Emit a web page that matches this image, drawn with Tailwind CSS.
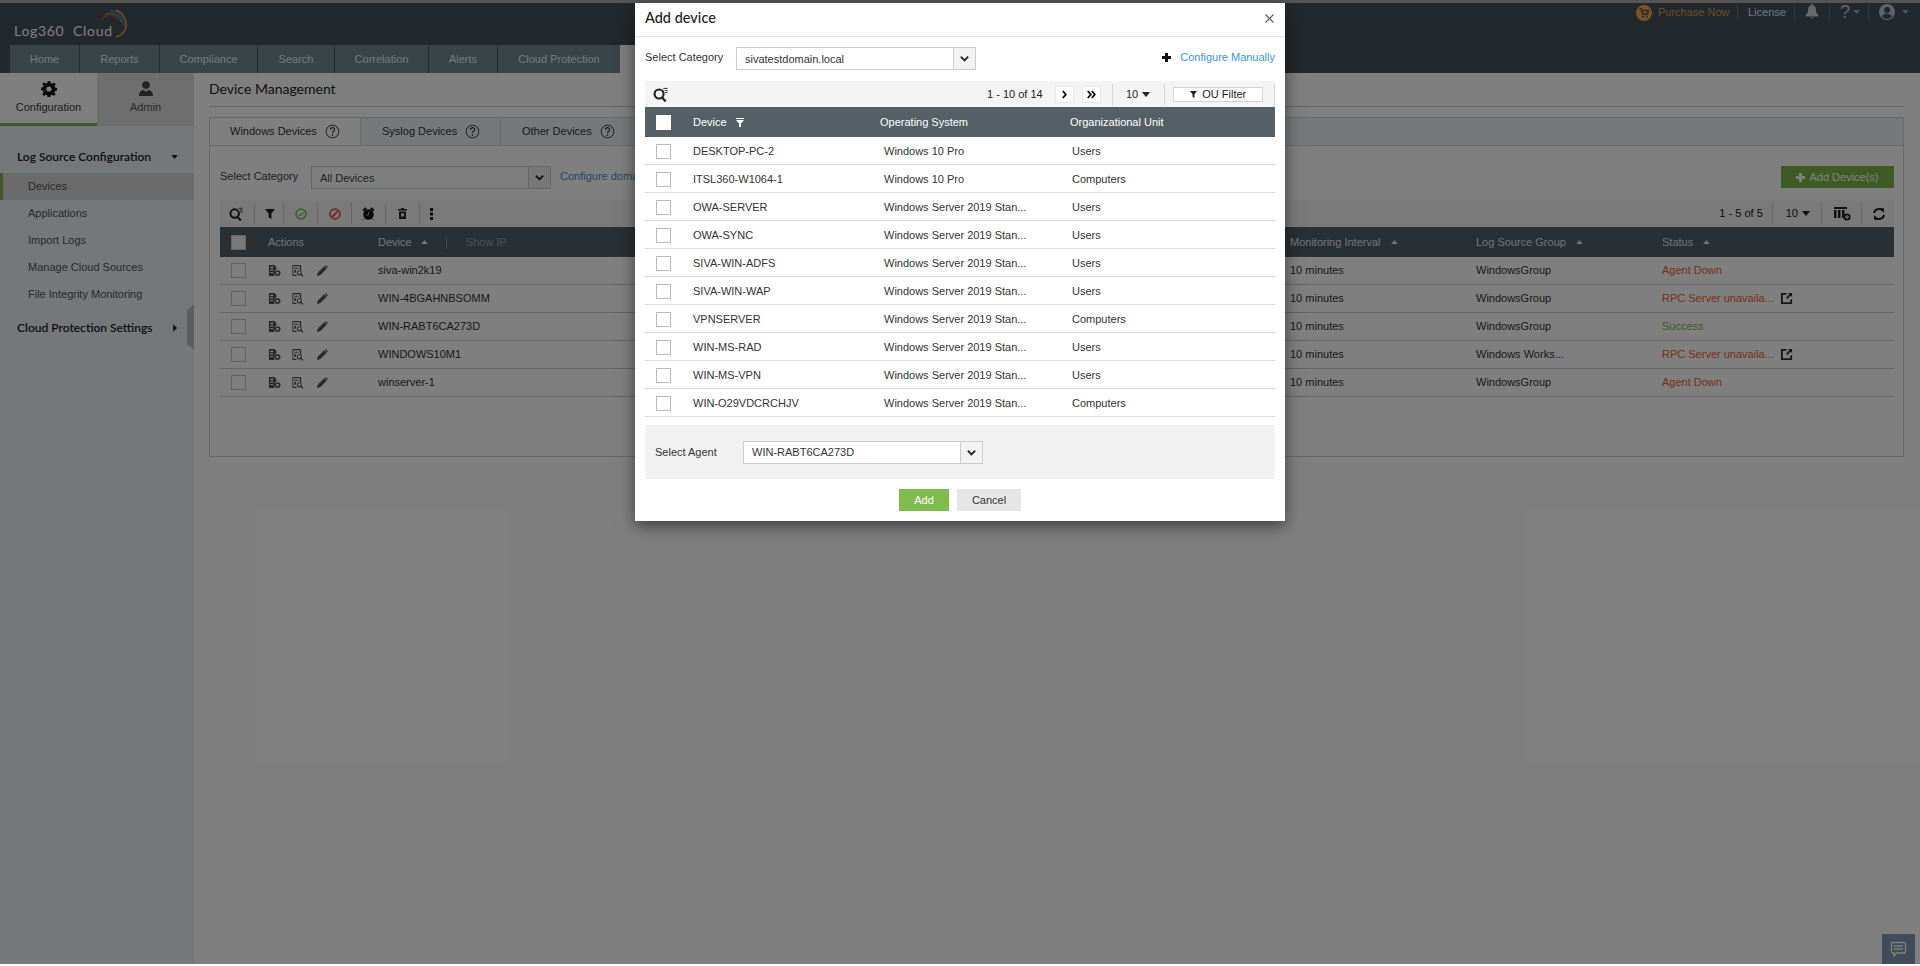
<!DOCTYPE html>
<html><head><meta charset="utf-8"><title>Log360 Cloud</title>
<script src="https://cdn.jsdelivr.net/npm/@tailwindcss/browser@4"></script></head>
<body class="bg-white">
<svg width="0" height="0" class="absolute">
<defs>
<symbol id="mag" viewBox="0 0 16 16"><circle cx="6.500" cy="7.500" r="4.800" fill="none" stroke="currentColor" stroke-width="2.300"/><path d="M9.500 11l4 4.500" stroke="currentColor" stroke-width="2.400"/><path d="M11 1.500h4.500M12.500 3.700h3M13 5.900h2.500" stroke="currentColor" stroke-width="1"/></symbol>
<symbol id="chev" viewBox="0 0 12 12"><path d="M2 4l4 4 4-4" fill="none" stroke="currentColor" stroke-width="2"/></symbol>
<symbol id="cfg" viewBox="0 0 14 14"><path d="M1 1h6l2 2v3.500H7.500V9H7v4H1zM2.500 3v1.200h3V3zm0 2.700v1.200h3V5.700zm0 2.800v1.200h3V8.500z" fill="currentColor" fill-rule="evenodd"/><circle cx="10.300" cy="9.800" r="2.300" fill="none" stroke="currentColor" stroke-width="1.700"/></symbol>
<symbol id="rep" viewBox="0 0 14 14"><path d="M1.500 1h8.500l1 1v5H9.500V2.500h-7v9H6V13H1.500z" fill="currentColor"/><path d="M3.500 4h4.500v1H3.500zM3.500 6.500h2v3h-2z" fill="currentColor"/><circle cx="9" cy="9.500" r="2.200" fill="none" stroke="currentColor" stroke-width="1.200"/><path d="M10.500 11l2.500 2.500" stroke="currentColor" stroke-width="1.300"/></symbol>
<symbol id="pen" viewBox="0 0 14 14"><path d="M1 13l.8-3.500 7-7 2.700 2.700-7 7zM9.500 2l1-1 2.500 2.500-1 1z" fill="currentColor"/></symbol>
<symbol id="ext" viewBox="0 0 14 14"><path d="M7 1H1v12h12V8h-2v3H3V3h4z" fill="currentColor"/><path d="M8.500 1H13v4.500l-1.500-1.500-3.500 3.500-1.500-1.500L10 2.500z" fill="currentColor"/></symbol>
<symbol id="up" viewBox="0 0 8 5"><path d="M0 5l4-5 4 5z" fill="currentColor"/></symbol>
<symbol id="dn" viewBox="0 0 8 5"><path d="M0 0l4 5 4-5z" fill="currentColor"/></symbol>
<symbol id="qm" viewBox="0 0 16 16"><circle cx="8" cy="8" r="6.800" fill="none" stroke="currentColor" stroke-width="1"/><path d="M5.800 6.200c0-3 4.500-3 4.500-.2 0 1.700-2.300 1.800-2.300 3.500" fill="none" stroke="currentColor" stroke-width="1.200"/><circle cx="8" cy="11.500" r=".9" fill="currentColor"/></symbol>
</defs>
</svg>

<div class="relative w-[1920px] h-[966px] overflow-hidden bg-white font-['Liberation_Sans',Arial,sans-serif] text-[11px] text-[#444]">
  <div class="h-[964px] flex flex-col">
    <div class="h-[3px] bg-[#aaa]"></div>
    <!-- header -->
    <header class="h-[70px] bg-[#465058] flex flex-col">
      <div class="h-[42px] flex justify-between">
        <div class="relative pl-[14px] pt-[18px] font-['Lato',sans-serif] text-[14px] leading-[20px] text-[#fff] tracking-[.7px]"><span class="whitespace-pre">Log360  Cloud</span><svg class="absolute left-[99px] top-[5px]" width="30" height="30" viewBox="0 0 30 30" fill="none"><path d="M3 12C8 4 15 5 19 13" stroke="#c04a4a" stroke-width="1.500"/><path d="M6 7C12 3 20 6 23 15" stroke="#5ea34c" stroke-width="1.500"/><path d="M11 3C18 2 24 8 25 18" stroke="#3f7fc2" stroke-width="1.800"/><path d="M17 2C25 5 29 14 26 22 24 26 21 28 17 29" stroke="#ef9a2e" stroke-width="1.600"/></svg></div>
        <div class="flex items-start pt-[1px] text-[11px] leading-[16px] text-[#fff]">
          <svg class="mt-[1px] mr-[6px]" width="16" height="16" viewBox="0 0 16 16"><circle cx="8" cy="8" r="8" fill="#f5a44a"/><path d="M3.500 4h2l1 5h5l1-3.500H6" fill="none" stroke="#465058" stroke-width="1.400"/><circle cx="7" cy="11.500" r="1" fill="#465058"/><circle cx="11" cy="11.500" r="1" fill="#465058"/></svg>
          <span class="w-[80px] border-r border-[#6a747c] h-[16px] text-[#d99a4e]">Purchase Now</span>
          <span class="w-[57px] pl-[10px] border-r border-[#6a747c] h-[16px] text-[#e8ecf8]">License</span>
          <span class="w-[35px] pl-[10px] border-r border-[#6a747c] h-[16px]"><svg width="14" height="15" viewBox="0 0 14 15"><path d="M7 0c1 0 1.200.8 1.200 1.200C10.500 2 11 4 11 6c0 3 1.500 4 2.500 5.500v1H.5v-1C1.500 10 3 9 3 6c0-2 .5-4 2.800-4.800C5.800.8 6 0 7 0zM5.500 13.500h3L7 15z" fill="#d0d0d0"/></svg></span>
          <span class="w-[39px] pl-[10px] border-r border-[#6a747c] h-[16px] flex items-center gap-[3px] text-[18px] text-[#c8c8c8]">?<svg width="7" height="4" class="text-[#aaa]"><use href="#dn"/></svg></span>
          <span class="w-[51px] pl-[10px] h-[16px] flex items-center gap-[7px]"><svg width="16" height="16" viewBox="0 0 16 16"><circle cx="8" cy="8" r="8" fill="#c0c4c8"/><circle cx="8" cy="6" r="3" fill="#465058"/><path d="M3 13c1-3 3-3.500 5-3.500s4 .5 5 3.500a8 8 0 0 1-10 0z" fill="#465058"/></svg><svg width="7" height="4" class="text-[#aaa]"><use href="#dn"/></svg></span>
        </div>
      </div>
      <nav class="h-[28px] pl-[10px] flex text-[#e6f3fb] leading-[28px]">
        <a class="w-[70px] text-center bg-[#748691] border-r border-[#465058]">Home</a>
        <a class="w-[80px] text-center bg-[#748691] border-r border-[#465058]">Reports</a>
        <a class="w-[98px] text-center bg-[#748691] border-r border-[#465058]">Compliance</a>
        <a class="w-[77px] text-center bg-[#748691] border-r border-[#465058]">Search</a>
        <a class="w-[94px] text-center bg-[#748691] border-r border-[#465058]">Correlation</a>
        <a class="w-[69px] text-center bg-[#748691] border-r border-[#465058]">Alerts</a>
        <a class="w-[122px] text-center bg-[#748691]">Cloud Protection</a>
        <span class="w-[90px] bg-white"></span>
      </nav>
    </header>
    <div class="flex-1 flex min-h-0">
      <!-- sidebar -->
      <aside class="relative w-[194px] bg-[#eceef2] shrink-0">
        <div class="flex h-[53px]">
          <div class="w-[97px] bg-white border-b-[3px] border-[#7fb74a] flex flex-col items-center pt-[8px] text-[#333]">
            <svg width="16" height="16" viewBox="0 0 16 16"><path d="M6.700 0h2.600l.4 2.200 1.400.6L13 1.500 14.800 3.300 13.500 5.200l.6 1.400 1.900.4v2.600l-2 .4-.6 1.400 1.300 1.800-1.800 1.800-1.900-1.300-1.400.6-.4 2H6.600l-.4-2-1.400-.6-1.800 1.300-1.800-1.800L2.500 11l-.6-1.400-1.900-.4V6.600l2-.4.500-1.400L1.200 3.100 3.100 1.200l1.800 1.300 1.400-.6zM8 5.400a2.600 2.600 0 1 0 0 5.200 2.600 2.600 0 0 0 0-5.200z" fill="#111" fill-rule="evenodd"/></svg>
            <span class="mt-[3px] leading-[14px]">Configuration</span>
          </div>
          <div class="w-[97px] bg-[#dcdcdc] flex flex-col items-center pt-[8px] text-[#555]">
            <svg width="16" height="16" viewBox="0 0 16 16" fill="#444"><circle cx="8" cy="4" r="3.800"/><path d="M1 15c0-4 2-5.500 5-6l2 2 2-2c3 .5 5 2 5 6z"/></svg>
            <span class="mt-[3px] leading-[14px]">Admin</span>
          </div>
        </div>
        <div class="h-[47px] pt-[22px] pl-[17px] pr-[16px] flex justify-between font-['Lato',sans-serif] text-[12px] leading-[18px] font-semibold text-[#222]">Log Source Configuration<svg class="mt-[7px]" width="7" height="4"><use href="#dn"/></svg></div>
        <ul class="text-[#555]">
          <li class="h-[27px] leading-[26px] pl-[25px] bg-[#d6d6d6] border-l-[3px] border-[#7fb74a]">Devices</li>
          <li class="h-[27px] leading-[27px] pl-[28px]">Applications</li>
          <li class="h-[27px] leading-[27px] pl-[28px]">Import Logs</li>
          <li class="h-[27px] leading-[27px] pl-[28px]">Manage Cloud Sources</li>
          <li class="h-[27px] leading-[27px] pl-[28px]">File Integrity Monitoring</li>
        </ul>
        <div class="mt-[11px] h-[18px] pl-[17px] pr-[17px] flex justify-between font-['Lato',sans-serif] text-[12px] leading-[18px] font-semibold text-[#222]">Cloud Protection Settings<svg class="mt-[5px]" width="4" height="8" viewBox="0 0 4 8"><path d="M0 0l4 4-4 4z" fill="#333"/></svg></div>
        <div class="absolute left-[187px] top-[231px] w-[7px] h-[46px] bg-[#b4bcc2] [clip-path:polygon(0_6px,100%_0,100%_100%,0_40px)]"></div>
      </aside>
      <!-- main -->
      <main class="flex-1 pl-[15px] pr-[16px]">
        <div class="h-[34px] border-b border-[#ccc] font-['Lato',sans-serif] text-[14px] leading-[32px] text-[#222]">Device Management</div>
        <section class="mt-[10px] h-[340px] border border-[#d4d4d4]">
          <div class="h-[28px] flex bg-[#eef0f4] text-[#333] border-b border-[#d4d4d4] leading-[27px]">
            <div class="w-[152px] h-[28px] -mt-px -ml-px pl-[20px] bg-white border border-b-0 border-[#d4d4d4] flex items-center gap-[8px]">Windows Devices<svg width="15" height="15"><use href="#qm"/></svg></div>
            <div class="w-[140px] pl-[21px] border-r border-[#d4d4d4] flex items-center gap-[8px]">Syslog Devices<svg width="15" height="15"><use href="#qm"/></svg></div>
            <div class="w-[122px] pl-[21px] flex items-center gap-[8px]">Other Devices<svg width="15" height="15"><use href="#qm"/></svg></div>
          </div>
          <div class="pl-[10px] pr-[9px]">
            <div class="mt-[20px] h-[23px] flex items-start">
              <span class="w-[91px] leading-[20px]">Select Category</span>
              <div class="w-[240px] h-[23px] border border-[#ccc] flex bg-white"><span class="flex-1 pl-[8px] leading-[23px]">All Devices</span><span class="w-[22px] bg-[#f0f0f0] border-l border-[#ccc] flex items-center justify-center text-[#222]"><svg width="11" height="11"><use href="#chev"/></svg></span></div>
              <span class="ml-[9px] leading-[20px] text-[#3f8fd8]">Configure domain</span>
              <span class="ml-auto w-[113px] h-[22px] bg-[#7fb74a] text-white flex items-center justify-center gap-[4px]"><svg width="9" height="9" viewBox="0 0 9 9"><path d="M3 0h3v3h3v3H6v3H3V6H0V3h3z" fill="#fff"/></svg>Add Device(s)</span>
            </div>
            <div class="mt-[11px] h-[27px] bg-[#f4f4f4] flex items-center text-[#222]">
              <svg class="ml-[9px] mr-[11px]" width="14" height="14"><use href="#mag"/></svg>
              <span class="h-[21px] border-l border-[#ccc]"></span>
              <svg class="ml-[10px] mr-[8px]" width="10" height="10" viewBox="0 0 11 11"><path d="M0 0h11L7 5v6L4 9V5z" fill="#222"/></svg>
              <span class="h-[21px] border-l border-[#ccc]"></span>
              <svg class="ml-[11px] mr-[10px]" width="12" height="12" viewBox="0 0 14 14" fill="none"><circle cx="7" cy="7" r="5.800" stroke="#6fc24a" stroke-width="1.800"/><path d="M4.300 7l2 2 3.500-4" stroke="#6fc24a" stroke-width="1.300"/></svg>
              <span class="h-[21px] border-l border-[#ccc]"></span>
              <svg class="ml-[11px] mr-[10px]" width="12" height="12" viewBox="0 0 14 14" fill="none"><circle cx="7" cy="7" r="5.800" stroke="#f0504a" stroke-width="2"/><path d="M3 11l8-8" stroke="#f0504a" stroke-width="2"/></svg>
              <span class="h-[21px] border-l border-[#ccc]"></span>
              <svg class="ml-[10px] mr-[10px]" width="13" height="14" viewBox="0 0 14 15"><circle cx="7" cy="8" r="5.600" fill="#111"/><path d="M1 3l2.500-2.500L5 2 2 4.500zM13 3L10.500.5 9 2l3 2.500zM2.500 12.500l-1.500 2M11.500 12.500l1.500 2" stroke="#111" stroke-width=".6" fill="#111"/><path d="M7 5v3.500H4.500" stroke="#aaa" fill="none"/></svg>
              <span class="h-[21px] border-l border-[#ccc]"></span>
              <svg class="ml-[12px] mr-[12px]" width="9" height="11" viewBox="0 0 13 16"><path d="M4.500 0h4v1.500H13V3.500H0V1.500h4.500zM1.500 5h10v11h-10zM4.500 7.500v5h4v-5z" fill="#222" fill-rule="evenodd"/></svg>
              <span class="h-[21px] border-l border-[#ccc]"></span>
              <svg class="ml-[10px]" width="3" height="12" viewBox="0 0 3 12" fill="#111"><rect width="3" height="3"/><rect y="4.500" width="3" height="3"/><rect y="9" width="3" height="3"/></svg>
              <span class="ml-auto leading-none">1 - 5 of 5</span>
              <span class="ml-[9px] h-[21px] border-l border-[#ccc]"></span>
              <span class="ml-[13px] flex items-center gap-[4px] text-[11px]">10<svg width="8" height="5"><use href="#dn"/></svg></span>
              <span class="ml-[11px] h-[21px] border-l border-[#ccc]"></span>
              <svg class="ml-[12px]" width="17" height="15" viewBox="0 0 17 15"><path d="M0 1h13v2H0zM0 4h2.500v8H0zM4 4h2.500v8H4zM8 4h2.500v8H8z" fill="#222"/><circle cx="13" cy="11" r="3.600" fill="#222"/><path d="M11 11h4M13 9v4" stroke="#fff"/></svg>
              <span class="ml-[10px] h-[21px] border-l border-[#ccc]"></span>
              <svg class="ml-[10px] mr-[8px]" width="14" height="14" viewBox="0 0 14 14" fill="none" stroke="#111" stroke-width="1.800"><path d="M2 6a5 5 0 0 1 9-2M12 8a5 5 0 0 1-9 2"/><path d="M8 1l4 .5V6zM6 13l-4-.5V8z" fill="#111" stroke="none"/></svg>
            </div>
            <div class="h-[30px] bg-[#555f66] text-[#dce8f2] grid grid-cols-[48px_110px_1fr_186px_186px_232px] items-center">
              <span class="pl-[11px]"><span class="block w-[15px] h-[15px] bg-[#f2f2f2] border border-[#ccc]"></span></span>
              <span class="">Actions</span>
              <span class="flex items-center">Device<svg class="ml-[9px]" width="7" height="4"><use href="#up"/></svg><span class="ml-[18px] h-[13px] border-l border-[#8a959c]"></span><span class="ml-[19px] text-[#98a4ac]">Show IP</span></span>
              <span class="flex items-center gap-[10px]">Monitoring Interval<svg width="7" height="4"><use href="#up"/></svg></span>
              <span class="flex items-center gap-[10px]">Log Source Group<svg width="7" height="4"><use href="#up"/></svg></span>
              <span class="flex items-center gap-[10px]">Status<svg width="7" height="4"><use href="#up"/></svg></span>
            </div>
            <div class="h-[28px] border-b border-[#ccc] text-[#333] grid grid-cols-[48px_110px_1fr_186px_186px_232px] items-center">
              <span class="pl-[11px]"><span class="block w-[15px] h-[15px] bg-white border border-[#b8c4cc]"></span></span>
              <span class="flex items-center gap-[10px] text-[#555]"><svg width="13" height="13"><use href="#cfg"/></svg><svg width="13" height="13"><use href="#rep"/></svg><svg class="ml-[2px]" width="13" height="13"><use href="#pen"/></svg></span>
              <span>siva-win2k19</span><span>10 minutes</span><span>WindowsGroup</span><span class="text-[#f0602c]">Agent Down</span>
            </div>
            <div class="h-[28px] border-b border-[#ccc] text-[#333] grid grid-cols-[48px_110px_1fr_186px_186px_232px] items-center">
              <span class="pl-[11px]"><span class="block w-[15px] h-[15px] bg-white border border-[#b8c4cc]"></span></span>
              <span class="flex items-center gap-[10px] text-[#555]"><svg width="13" height="13"><use href="#cfg"/></svg><svg width="13" height="13"><use href="#rep"/></svg><svg class="ml-[2px]" width="13" height="13"><use href="#pen"/></svg></span>
              <span>WIN-4BGAHNBSOMM</span><span>10 minutes</span><span>WindowsGroup</span><span class="flex items-center text-[#f0602c]">RPC Server unavaila...<svg class="ml-[6px] text-[#333]" width="13" height="13"><use href="#ext"/></svg></span>
            </div>
            <div class="h-[28px] border-b border-[#ccc] text-[#333] grid grid-cols-[48px_110px_1fr_186px_186px_232px] items-center">
              <span class="pl-[11px]"><span class="block w-[15px] h-[15px] bg-white border border-[#b8c4cc]"></span></span>
              <span class="flex items-center gap-[10px] text-[#555]"><svg width="13" height="13"><use href="#cfg"/></svg><svg width="13" height="13"><use href="#rep"/></svg><svg class="ml-[2px]" width="13" height="13"><use href="#pen"/></svg></span>
              <span>WIN-RABT6CA273D</span><span>10 minutes</span><span>WindowsGroup</span><span class="text-[#78b83c]">Success</span>
            </div>
            <div class="h-[28px] border-b border-[#ccc] text-[#333] grid grid-cols-[48px_110px_1fr_186px_186px_232px] items-center">
              <span class="pl-[11px]"><span class="block w-[15px] h-[15px] bg-white border border-[#b8c4cc]"></span></span>
              <span class="flex items-center gap-[10px] text-[#555]"><svg width="13" height="13"><use href="#cfg"/></svg><svg width="13" height="13"><use href="#rep"/></svg><svg class="ml-[2px]" width="13" height="13"><use href="#pen"/></svg></span>
              <span>WINDOWS10M1</span><span>10 minutes</span><span>Windows Works...</span><span class="flex items-center text-[#f0602c]">RPC Server unavaila...<svg class="ml-[6px] text-[#333]" width="13" height="13"><use href="#ext"/></svg></span>
            </div>
            <div class="h-[28px] border-b border-[#ccc] text-[#333] grid grid-cols-[48px_110px_1fr_186px_186px_232px] items-center">
              <span class="pl-[11px]"><span class="block w-[15px] h-[15px] bg-white border border-[#b8c4cc]"></span></span>
              <span class="flex items-center gap-[10px] text-[#555]"><svg width="13" height="13"><use href="#cfg"/></svg><svg width="13" height="13"><use href="#rep"/></svg><svg class="ml-[2px]" width="13" height="13"><use href="#pen"/></svg></span>
              <span>winserver-1</span><span>10 minutes</span><span>WindowsGroup</span><span class="text-[#f0602c]">Agent Down</span>
            </div>
          </div>
        </section>
      </main>
    </div>
  </div>
  <!-- chat button -->
  <div class="absolute left-[1882px] top-[934px] w-[33px] h-[30px] bg-[#7f9ab4] flex items-center justify-center">
    <svg width="17" height="17" viewBox="0 0 17 17" fill="none" stroke="#fff" stroke-width="1.300"><path d="M2.500 1.500h12a1.500 1.500 0 0 1 1 1v8.500a1.500 1.500 0 0 1-1 1H6.500l-2.500 3v-3H2.500a1.500 1.500 0 0 1-1-1V2.500a1.500 1.500 0 0 1 1-1z"/><path d="M4 5h9M4 8h9"/></svg>
  </div>
  <!-- overlay -->
  <div class="absolute left-0 top-0 w-full h-[964px] bg-black/50"></div>
  <!-- modal -->
  <div class="absolute left-[635px] top-[3px] w-[650px] h-[518px] bg-white shadow-[0_5px_15px_rgba(0,0,0,0.5)] text-[#333]">
    <div class="h-[34px] border-b border-[#e2e2e2] px-[10px] pb-[3px] flex items-center justify-between">
      <span class="font-['Lato',sans-serif] text-[14.5px] font-medium text-[#222]">Add device</span>
      <svg class="mr-[1px]" width="9" height="9" viewBox="0 0 9 9" stroke="#555" stroke-width="1.100"><path d="M.5.500l8 8M8.500.500l-8 8"/></svg>
    </div>
    <div class="px-[10px]">
      <div class="mt-[10px] h-[23px] flex items-start">
        <span class="w-[91px] leading-[20px]">Select Category</span>
        <div class="w-[240px] h-[23px] border border-[#ccc] flex"><span class="flex-1 pl-[8px] leading-[23px]">sivatestdomain.local</span><span class="w-[22px] bg-[#f2f2f2] border-l border-[#ccc] flex items-center justify-center text-[#222]"><svg width="11" height="11"><use href="#chev"/></svg></span></div>
        <svg class="ml-auto mr-[9px] mt-[6px]" width="9" height="9" viewBox="0 0 9 9"><path d="M3 0h3v3h3v3H6v3H3V6H0V3h3z" fill="#111"/></svg>
        <span class="leading-[20px] text-[#3b97e3]">Configure Manually</span>
      </div>
      <div class="mt-[11px] h-[26px] bg-[#f4f4f4] flex items-center text-[#222]">
        <svg class="ml-[8px]" width="15" height="15"><use href="#mag"/></svg>
        <span class="ml-[319px] w-[57px]">1 - 10 of 14</span>
        <span class="ml-[11px] w-[19px] h-[17px] bg-white border border-[#e6e6e6] flex items-center justify-center"><svg width="5" height="9" viewBox="0 0 5 9" fill="none" stroke="#111" stroke-width="1.900"><path d="M.8 1l3 3.500-3 3.500"/></svg></span>
        <span class="ml-[8px] w-[19px] h-[17px] bg-white border border-[#e6e6e6] flex items-center justify-center"><svg width="9" height="9" viewBox="0 0 9 9" fill="none" stroke="#111" stroke-width="1.900"><path d="M.8 1l3 3.500-3 3.500M4.800 1l3 3.500-3 3.500"/></svg></span>
        <span class="ml-[11px] h-[21px] border-l border-[#d4d4d4]"></span>
        <span class="ml-[13px] flex items-center gap-[4px] text-[11px]">10<svg width="8" height="5"><use href="#dn"/></svg></span>
        <span class="ml-[14px] h-[21px] border-l border-[#d4d4d4]"></span>
        <span class="ml-[8px] w-[90px] h-[15px] bg-white border border-[#d4d4d4] flex items-center justify-center gap-[5px] text-[11px]"><svg width="7" height="7" viewBox="0 0 11 11"><path d="M0 0h11L7 5v6L4 9V5z" fill="#222"/></svg>OU Filter</span>
        <span class="ml-auto h-[21px] border-l border-[#d4d4d4]"></span>
      </div>
      <div class="h-[30px] bg-[#555f66] text-white grid grid-cols-[48px_187px_190px_1fr] items-center">
        <span class="pl-[11px]"><span class="block w-[15px] h-[15px] bg-white"></span></span>
        <span class="flex items-center gap-[9px]">Device<svg width="8" height="9" viewBox="0 0 8 9"><path d="M0 0h8v1H0zM0 2h8L5 5.500V9H3V5.500z" fill="#fff"/></svg></span>
        <span>Operating System</span>
        <span>Organizational Unit</span>
      </div>
      <div class="h-[28px] pt-[2px] border-b border-[#ddd] grid grid-cols-[48px_191px_188px_1fr] items-center"><span class="pl-[11px]"><span class="block w-[15px] h-[15px] border border-[#bbb]"></span></span><span>DESKTOP-PC-2</span><span>Windows 10 Pro</span><span>Users</span></div>
      <div class="h-[28px] pt-[2px] border-b border-[#ddd] grid grid-cols-[48px_191px_188px_1fr] items-center"><span class="pl-[11px]"><span class="block w-[15px] h-[15px] border border-[#bbb]"></span></span><span>ITSL360-W1064-1</span><span>Windows 10 Pro</span><span>Computers</span></div>
      <div class="h-[28px] pt-[2px] border-b border-[#ddd] grid grid-cols-[48px_191px_188px_1fr] items-center"><span class="pl-[11px]"><span class="block w-[15px] h-[15px] border border-[#bbb]"></span></span><span>OWA-SERVER</span><span>Windows Server 2019 Stan...</span><span>Users</span></div>
      <div class="h-[28px] pt-[2px] border-b border-[#ddd] grid grid-cols-[48px_191px_188px_1fr] items-center"><span class="pl-[11px]"><span class="block w-[15px] h-[15px] border border-[#bbb]"></span></span><span>OWA-SYNC</span><span>Windows Server 2019 Stan...</span><span>Users</span></div>
      <div class="h-[28px] pt-[2px] border-b border-[#ddd] grid grid-cols-[48px_191px_188px_1fr] items-center"><span class="pl-[11px]"><span class="block w-[15px] h-[15px] border border-[#bbb]"></span></span><span>SIVA-WIN-ADFS</span><span>Windows Server 2019 Stan...</span><span>Users</span></div>
      <div class="h-[28px] pt-[2px] border-b border-[#ddd] grid grid-cols-[48px_191px_188px_1fr] items-center"><span class="pl-[11px]"><span class="block w-[15px] h-[15px] border border-[#bbb]"></span></span><span>SIVA-WIN-WAP</span><span>Windows Server 2019 Stan...</span><span>Users</span></div>
      <div class="h-[28px] pt-[2px] border-b border-[#ddd] grid grid-cols-[48px_191px_188px_1fr] items-center"><span class="pl-[11px]"><span class="block w-[15px] h-[15px] border border-[#bbb]"></span></span><span>VPNSERVER</span><span>Windows Server 2019 Stan...</span><span>Computers</span></div>
      <div class="h-[28px] pt-[2px] border-b border-[#ddd] grid grid-cols-[48px_191px_188px_1fr] items-center"><span class="pl-[11px]"><span class="block w-[15px] h-[15px] border border-[#bbb]"></span></span><span>WIN-MS-RAD</span><span>Windows Server 2019 Stan...</span><span>Users</span></div>
      <div class="h-[28px] pt-[2px] border-b border-[#ddd] grid grid-cols-[48px_191px_188px_1fr] items-center"><span class="pl-[11px]"><span class="block w-[15px] h-[15px] border border-[#bbb]"></span></span><span>WIN-MS-VPN</span><span>Windows Server 2019 Stan...</span><span>Users</span></div>
      <div class="h-[28px] pt-[2px] border-b border-[#ddd] grid grid-cols-[48px_191px_188px_1fr] items-center"><span class="pl-[11px]"><span class="block w-[15px] h-[15px] border border-[#bbb]"></span></span><span>WIN-O29VDCRCHJV</span><span>Windows Server 2019 Stan...</span><span>Computers</span></div>
      <div class="mt-[8px] h-[54px] bg-[#f1f1f1] pl-[10px] flex items-center">
        <span class="w-[88px]">Select Agent</span>
        <div class="w-[240px] h-[23px] border border-[#ccc] bg-white flex"><span class="flex-1 pl-[8px] leading-[21px]">WIN-RABT6CA273D</span><span class="w-[22px] bg-[#f2f2f2] border-l border-[#ccc] flex items-center justify-center text-[#222]"><svg width="11" height="11"><use href="#chev"/></svg></span></div>
      </div>
      <div class="mt-[10px] flex justify-center gap-[8px]">
        <button class="w-[50px] h-[22px] bg-[#7fbc4b] text-white text-[11px]">Add</button>
        <button class="w-[64px] h-[22px] bg-[#e6e6e6] text-[#333] text-[11px]">Cancel</button>
      </div>
    </div>
  </div>
</div>
</body></html>
